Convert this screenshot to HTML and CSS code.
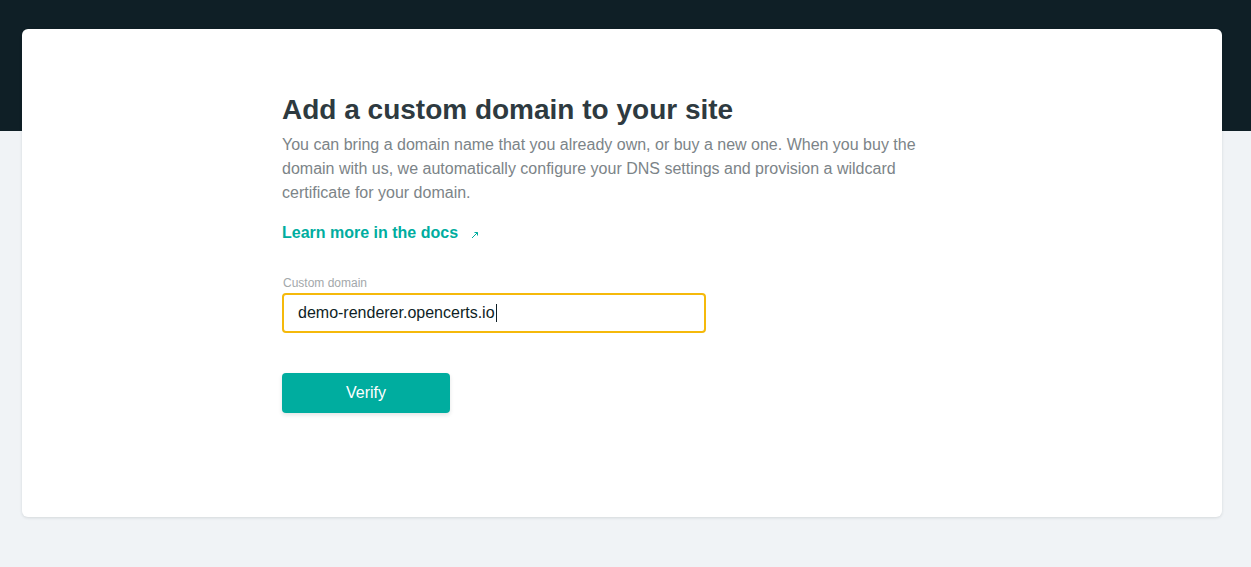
FILE: index.html
```html
<!DOCTYPE html>
<html>
<head>
<meta charset="utf-8">
<link rel="stylesheet" href="styles.css">
</head>
<body>
<div class="band"></div>
<main class="page">
  <section class="card">
    <div class="content">
      <h1 class="title">Add a custom domain to your site</h1>
      <p class="desc">You can bring a domain name that you already own, or buy a new one. When you buy the domain with us, we automatically configure your DNS settings and provision a wildcard certificate for your domain.</p>
      <a class="docs" href="#">Learn more in the docs <svg class="ext" width="10" height="10" viewBox="0 0 10 10"><path d="M2 8 L7.5 2.5 M4.5 2.5 H7.5 V5.5" fill="none" stroke="#00ad9f" stroke-width="1"/></svg></a>
      <form class="form">
        <label class="label">Custom domain</label>
        <div class="input"><span>demo-renderer.opencerts.io</span><span class="caret"></span></div>
        <button class="btn" type="button">Verify</button>
      </form>
    </div>
  </section>
</main>
</body>
</html>
```
FILE: styles.css
```css
* { box-sizing: border-box; }
html, body { margin: 0; padding: 0; }
body {
  background: #f0f3f6;
  font-family: "Liberation Sans", Arial, sans-serif;
  height: 567px;
  overflow: hidden;
  position: relative;
}
.band {
  height: 131px;
  background: #0f1f26;
}
.page {
  margin-top: -102px;
  padding: 0 29px 0 22px;
}
.card {
  background: #fff;
  border-radius: 6px;
  height: 488px;
  box-shadow: 0 1px 3px rgba(14, 30, 37, 0.12);
  padding: 64px 260px 0 260px;
}
.title {
  margin: 0;
  font-size: 28px;
  line-height: 34px;
  font-weight: 700;
  color: #2e3a40;
}
.desc {
  margin: 6px 0 0;
  font-size: 16px;
  line-height: 24px;
  color: #7c8488;
  max-width: 650px;
}
.docs {
  display: inline-flex;
  align-items: center;
  margin-top: 16px;
  font-size: 16px;
  line-height: 24px;
  font-weight: 700;
  color: #00ad9f;
  text-decoration: none;
}
.ext { margin-left: 12px; margin-top: 4px; }
.form { margin-top: 30px; }
.label {
  display: block;
  font-size: 12px;
  line-height: 16px;
  color: #a3a8ab;
  padding-left: 1px;
}
.input {
  margin-top: 2px;
  width: 424px;
  height: 40px;
  border: 2px solid #f5b90b;
  border-radius: 4px;
  display: flex;
  align-items: center;
  padding-left: 14px;
  font-size: 16px;
  color: #0e1e25;
}
.caret {
  display: inline-block;
  width: 1px;
  height: 18px;
  background: #0e1e25;
  margin-left: 1px;
}
.btn {
  display: block;
  margin-top: 40px;
  width: 168px;
  height: 40px;
  border: 0;
  border-radius: 4px;
  background: #00ad9f;
  color: #fff;
  font-family: "Liberation Sans", Arial, sans-serif;
  font-size: 16px;
  box-shadow: 0 2px 4px rgba(14, 30, 37, 0.12);
}
```
